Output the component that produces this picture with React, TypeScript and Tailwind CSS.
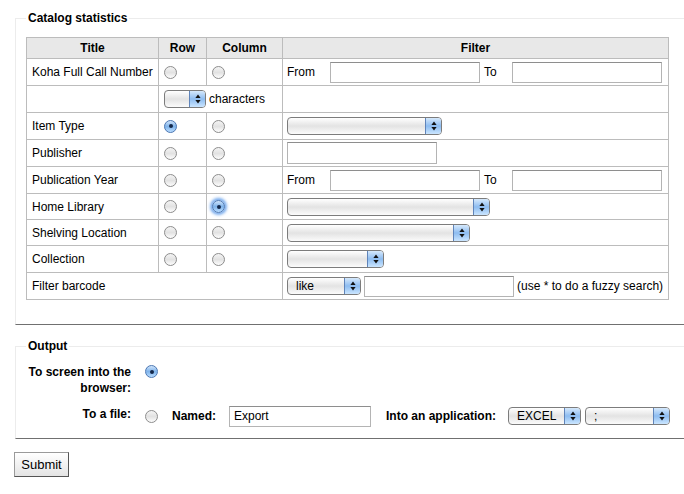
import React from 'react';

function Radio({ checked = false, focus = false }: { checked?: boolean; focus?: boolean }) {
  if (checked) {
    return (
      <span
        className={
          'relative inline-flex h-[13px] w-[13px] shrink-0 items-center justify-center rounded-full border border-[#4d78b3] bg-linear-to-b from-[#cfe4fb] via-[#7fb3ea] to-[#b9dcff] ' +
          (focus ? 'shadow-[0_0_3px_2px_rgba(70,140,230,0.75)]' : '')
        }
      >
        <span className="h-[4px] w-[4px] rounded-full bg-[#13284a]" />
      </span>
    );
  }
  return (
    <span className="inline-block h-[13px] w-[13px] shrink-0 rounded-full border border-[#8d8d8d] bg-linear-to-b from-[#f4f4f4] via-[#e2e2e2] to-[#fdfdfd]" />
  );
}

function Select({ className, label = '' }: { className: string; label?: string }) {
  return (
    <div
      className={
        'flex h-[18px] shrink-0 overflow-hidden rounded-[4px] border border-[#7c7c7c] bg-linear-to-b from-white via-[#e3e3e3] to-[#fbfbfb] ' +
        className
      }
    >
      <span className="flex-1 truncate pl-[8px] text-[12px] leading-[16px]">{label}</span>
      <span className="flex w-[16px] items-center justify-center border-l border-[#5f84ba] bg-linear-to-b from-[#d6e9fc] via-[#8dbcf0] to-[#cbe6ff]">
        <svg width="6" height="10" viewBox="0 0 6 10">
          <path d="M3 0.5 L5.6 4 L0.4 4 Z" fill="#111" />
          <path d="M3 9.5 L5.6 6 L0.4 6 Z" fill="#111" />
        </svg>
      </span>
    </div>
  );
}

function TextBox({ className, value }: { className: string; value?: string }) {
  return (
    <input
      type="text"
      defaultValue={value}
      className={
        'h-[21px] shrink-0 border border-[#b4b4b4] border-t-[#8e8e8e] bg-white px-[4px] text-[12px] outline-none ' +
        className
      }
    />
  );
}

const td = 'border border-[#bcbcbc] px-[4px] align-middle';

function RadioRow({ title, row = false, col = false, focus = false, short = false, children }: { title: string; row?: boolean; col?: boolean; focus?: boolean; short?: boolean; children?: React.ReactNode }) {
  return (
    <tr>
      <td className={td + (short ? ' h-[26px]' : ' h-[27px]') + ' pl-[5px]'}>{title}</td>
      <td className={td + ' pl-[5px]'}>
        <div className="flex items-center"><Radio checked={row} /></div>
      </td>
      <td className={td + ' pl-[5px]'}>
        <div className="flex items-center"><Radio checked={col} focus={focus} /></div>
      </td>
      <td className={td}>
        <div className="flex items-center">{children}</div>
      </td>
    </tr>
  );
}

function FromTo() {
  return (
    <>
      <span className="w-[43px]">From</span>
      <TextBox className="w-[150px]" />
      <span className="ml-[4px] w-[28px]">To</span>
      <TextBox className="w-[150px]" />
    </>
  );
}

export default function App() {
  return (
    <div className="min-h-[494px] w-[684px] overflow-hidden bg-white font-['Liberation_Sans',Arial,sans-serif] text-[12px] text-black">
      <form onSubmit={(e) => e.preventDefault()}>
        <fieldset className="ml-[15px] mt-[10px] border-t border-b border-l border-t-[#ececec] border-l-[#ececec] border-b-[#707070] pt-[11px] pb-[24px] pl-[10px]">
          <legend className="px-[2px] text-[12px] font-bold leading-[16px]">Catalog statistics</legend>
          <table className="w-[643px] table-fixed border-collapse">
            <colgroup>
              <col className="w-[132px]" />
              <col className="w-[48px]" />
              <col className="w-[76px]" />
              <col />
            </colgroup>
            <thead>
              <tr className="bg-[#e8e8e8] font-bold">
                <th className={td + ' h-[21px] text-center'}>Title</th>
                <th className={td + ' text-center'}>Row</th>
                <th className={td + ' text-center'}>Column</th>
                <th className={td + ' text-center'}>Filter</th>
              </tr>
            </thead>
            <tbody>
              <RadioRow title="Koha Full Call Number">
                <FromTo />
              </RadioRow>
              <tr>
                <td className={td + ' h-[27px]'} />
                <td className={td + ' pl-[5px]'} colSpan={2}>
                  <div className="flex items-center gap-[3px]">
                    <Select className="w-[42px]" />
                    <span>characters</span>
                  </div>
                </td>
                <td className={td} />
              </tr>
              <RadioRow title="Item Type" row>
                <Select className="w-[155px]" />
              </RadioRow>
              <RadioRow title="Publisher">
                <TextBox className="h-[22px] w-[150px]" />
              </RadioRow>
              <RadioRow title="Publication Year">
                <FromTo />
              </RadioRow>
              <RadioRow title="Home Library" col focus short>
                <Select className="w-[203px]" />
              </RadioRow>
              <RadioRow title="Shelving Location" short>
                <Select className="w-[183px]" />
              </RadioRow>
              <RadioRow title="Collection">
                <Select className="w-[97px]" />
              </RadioRow>
              <tr>
                <td className={td + ' h-[27px] pl-[5px]'} colSpan={3}>Filter barcode</td>
                <td className={td}>
                  <div className="flex items-center">
                    <Select className="w-[74px]" label="like" />
                    <TextBox className="ml-[3px] w-[150px]" />
                    <span className="ml-[3px] whitespace-nowrap">(use * to do a fuzzy search)</span>
                  </div>
                </td>
              </tr>
            </tbody>
          </table>
        </fieldset>

        <fieldset className="ml-[15px] mt-[13px] border-t border-b border-l border-t-[#ececec] border-l-[#ececec] border-b-[#707070] pt-[10px] pb-[11px] pl-[10px]">
          <legend className="px-[2px] text-[12px] font-bold leading-[16px]">Output</legend>
          <div className="flex flex-col gap-[9px]">
            <div className="flex items-start">
              <label className="w-[105px] text-right font-bold leading-[16px]">
                To screen into the
                <br />
                browser:
              </label>
              <span className="ml-[14px] mt-[1px] flex">
                <Radio checked />
              </span>
            </div>
            <div className="flex h-[22px] items-center">
              <label className="w-[105px] -mt-[5px] text-right font-bold leading-[16px]">To a file:</label>
              <span className="ml-[14px] flex">
                <Radio />
              </span>
              <span className="ml-[14px] w-[57px] font-bold">Named:</span>
              <TextBox className="w-[142px]" value="Export" />
              <span className="ml-[15px] w-[122px] font-bold">Into an application:</span>
              <Select className="w-[73px]" label="EXCEL" />
              <Select className="ml-[4px] w-[85px]" label=";" />
            </div>
          </div>
        </fieldset>

        <button
          type="submit"
          className="ml-[14px] mt-[13px] h-[25px] w-[55px] border border-[#9a9a9a] border-r-[#555] border-b-[#555] bg-linear-to-b from-white to-[#e4e4e4] text-[13px]"
        >
          Submit
        </button>
      </form>
    </div>
  );
}
